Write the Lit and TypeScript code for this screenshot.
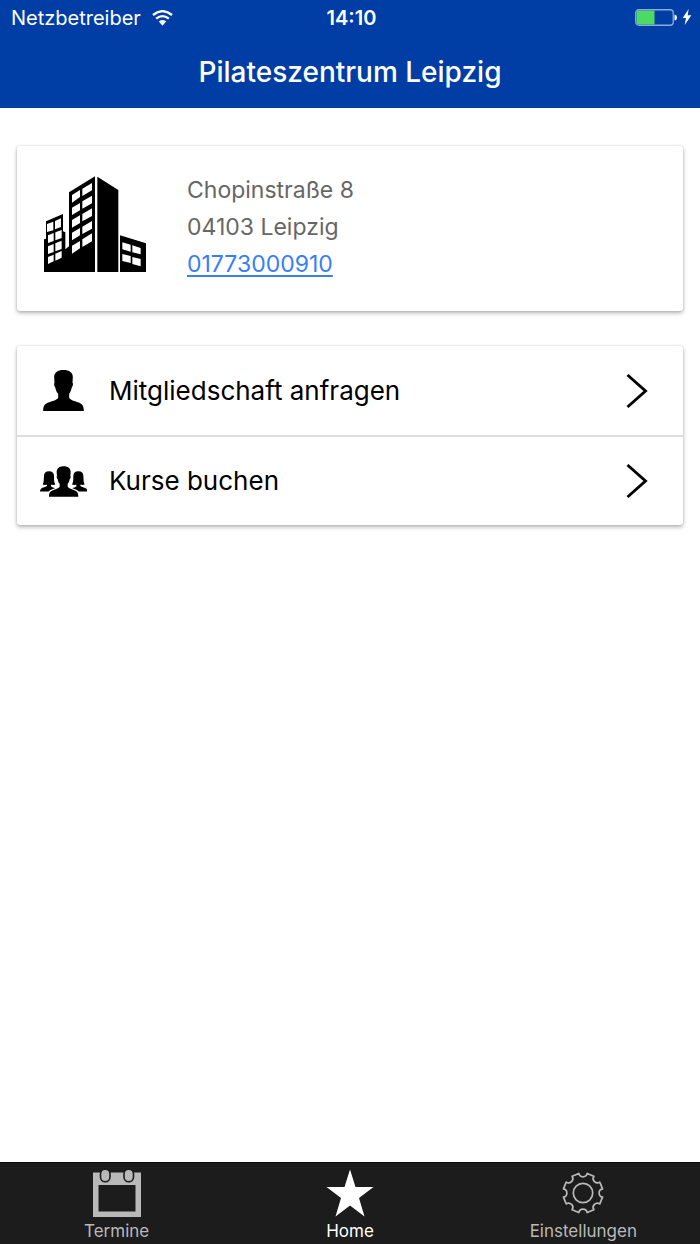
import { LitElement, html, css, svg, nothing } from "lit";
import { customElement, property } from "lit/decorators.js";

/** Outline of a cog with eight teeth and round notches between them. */
function cogOutline(centre: number, radius: number, teeth: number): string {
  const half = (12 * Math.PI) / 180;
  const step = (2 * Math.PI) / teeth;
  const at = (a: number) =>
    `${(centre + radius * Math.sin(a)).toFixed(2)} ${(centre - radius * Math.cos(a)).toFixed(2)}`;
  const notchRadius = (radius * 0.212).toFixed(2);
  let d = `M${at(-half)}`;
  for (let i = 0; i < teeth; i++) {
    d += `A${notchRadius} ${notchRadius} 0 0 0 ${at(i * step + half)}L${at((i + 1) * step - half)}`;
  }
  return d + "Z";
}

const wifi = svg`<svg class="wifi" viewBox="0 0 62 48" aria-hidden="true">
  <path fill="none" stroke="#fff" stroke-width="7" d="M2.500 15Q31 -8 59.500 15M12 26Q31 10.500 50 26"/>
  <path fill="#fff" d="M20 34.500Q31 26 42 34.500L31 47Z"/></svg>`;

const battery = svg`<svg class="battery" viewBox="0 0 42 17" role="img" aria-label="Akku 50 %">
  <rect x=".75" y=".75" width="37.500" height="15.500" rx="3" fill="none" stroke="#8fa9da" stroke-width="1.300"/>
  <path fill="#4cd964" d="M3.500 1.500H19.500V15.500H3.500Q1.500 15.500 1.500 13.500V3.500Q1.500 1.500 3.500 1.500Z"/>
  <path fill="#fff" d="M39.500 5.500Q42 6 42 8.500T39.500 11.500Z"/></svg>`;

const bolt = svg`<svg class="bolt" viewBox="0 0 26 48" aria-hidden="true">
  <path fill="#fff" d="M18 0L0 27H10L6 48L26 19H15Z"/></svg>`;

const buildings = svg`<svg class="buildings" viewBox="102 121 306 288" aria-hidden="true">
  <path d="M102 409V311L108 309V257L159 235V287L166 290V341L177 332V170L255 122V409ZM262 409V123L325 163V409ZM330 409V299L408 323V409Z"/>
  <g fill="#fff">
    <path d="M186 178L210 163V184L186 201ZM217 159L246 142V164L217 181ZM186 216L210 202V224L186 238ZM217 197L246 180V203L217 219ZM186 253L210 239V262L186 276ZM217 235L246 218V241L217 257ZM186 291L210 277V299L186 314ZM217 273L246 256V279L217 295ZM186 330L210 316V338L186 354ZM217 311L246 293V317L217 334Z"/>
    <path d="M111 265L130 258V284L111 289ZM135 256L153 248V274L135 281ZM114 299L131 292V316L114 322ZM136 290L155 283V307L136 314ZM114 332L131 325V349L114 355ZM136 323L155 315V340L136 347ZM114 364L131 357V377L114 385ZM136 354L155 346V366L136 375Z"/>
    <path d="M337 320L362 327V348L337 341ZM367 329L392 337V356L367 350ZM337 355L362 361V382L337 376ZM367 364L392 370V392L367 385Z"/>
  </g></svg>`;

const person = svg`<svg class="person" viewBox="97 105 122 123" aria-hidden="true">
  <path d="M158 105C175 105 187 113 186 127L185 143C188 145 186 154 183 157C181 166 179 172 175 176V189C179 195 190 198 201 202C214 206 219 212 219 228H97C97 212 102 206 115 202C126 198 138 195 142 189V176C137 172 135 166 133 157C130 154 129 145 131 143L130 127C129 113 141 105 158 105Z"/></svg>`;

const group = svg`<svg class="group" viewBox="87 389 141 92" aria-hidden="true">
  <path d="M158 389C171 389 179 395 179 407L178 418C180 420 179 426 176 428C175 434 173 439 170 442V451C174 457 183 458 190 461C199 464 202 469 202 481H114C114 469 117 464 126 461C133 458 142 457 146 451V442C143 439 141 434 140 428C137 426 136 420 138 418L137 407C137 395 145 389 158 389Z"/>
  <path d="M114 404C124 404 129 409 129 418C129 430 129 438 133 444C129 446 124 445 120 445V449C123 453 128 453 132 455C123 458 116 460 113 465H87C87 457 91 454 100 452C104 451 107 450 108 448V445C104 445 99 446 95 444C99 438 98 430 99 418C99 409 104 404 114 404Z"/>
  <path transform="translate(316 0) scale(-1 1)" d="M114 404C124 404 129 409 129 418C129 430 129 438 133 444C129 446 124 445 120 445V449C123 453 128 453 132 455C123 458 116 460 113 465H87C87 457 91 454 100 452C104 451 107 450 108 448V445C104 445 99 446 95 444C99 438 98 430 99 418C99 409 104 404 114 404Z"/></svg>`;

const chevron = svg`<svg class="chevron" viewBox="0 0 22 36" aria-hidden="true">
  <path fill="none" stroke="#000" stroke-width="2.900" d="M1.500 2L19.500 18L1.500 34"/></svg>`;

const calendar = svg`<svg viewBox="0 0 48 48" aria-hidden="true">
  <path fill="#b9b9b9" fill-rule="evenodd" d="M0 3.500H48V48H0ZM5.500 16V42.500H42.500V16Z"/>
  <g fill="#b9b9b9" stroke="#1c1c1c" stroke-width="1.600">
    <rect x="7.500" y=".2" width="9.500" height="12.500" rx="4.700"/>
    <rect x="31" y=".2" width="9.500" height="12.500" rx="4.700"/>
  </g></svg>`;

const star = svg`<svg viewBox="0 0 48 48" aria-hidden="true">
  <path fill="#fff" d="M24 .5L29.500 18H47.500L33 29L38.500 47.500L24 36.500L9.500 47.500L15 29L.5 18H18.500Z"/></svg>`;

const cog = svg`<svg viewBox="0 0 48 48" aria-hidden="true">
  <g fill="none" stroke="#b9b9b9" stroke-width="1.700" stroke-linejoin="round">
    <path d=${cogOutline(24, 20, 8)}/><circle cx="24" cy="24" r="9.700"/>
  </g></svg>`;

@customElement("status-bar")
export class StatusBar extends LitElement {
  static styles = css`
    :host {
      display: grid;
      grid-template-columns: 1fr auto 1fr;
      align-items: center;
      height: 36px;
      padding: 0 8px 0 11px;
      font-size: 20px;
      line-height: 24px;
    }
    .carrier, .power { display: flex; align-items: center; }
    .carrier { gap: 11px; }
    .power { justify-content: flex-end; gap: 5px; padding-bottom: 2px; }
    .time { font-weight: 600; }
    .wifi { width: 21px; height: 16px; }
    .battery { width: 42px; height: 17px; }
    .bolt { width: 10px; height: 16px; }
  `;
  render() {
    return html`
      <div class="carrier"><span>Netzbetreiber</span>${wifi}</div>
      <div class="time">14:10</div>
      <div class="power">${battery}${bolt}</div>`;
  }
}

@customElement("tab-bar")
export class TabBar extends LitElement {
  @property() active = "Home";
  static styles = css`
    :host { display: block; background: #1c1c1c; border-top: 1px solid #0d0d0d; }
    .tabs { display: grid; grid-template-columns: repeat(3, 1fr); }
    .tab {
      display: flex;
      flex-direction: column;
      align-items: center;
      gap: 3px;
      padding: 6px 0 2px;
      border: 0;
      background: none;
      color: #b9b9b9;
      font: inherit;
      font-size: 17px;
      line-height: 22px;
      cursor: pointer;
    }
    .tab[aria-current] { color: #fff; }
    .tab svg { width: 48px; height: 48px; }
  `;
  render() {
    const tabs = [
      { label: "Termine", icon: calendar },
      { label: "Home", icon: star },
      { label: "Einstellungen", icon: cog },
    ];
    return html`<nav class="tabs">
      ${tabs.map(
        (t) => html`<button class="tab" type="button"
          aria-current=${t.label === this.active ? "page" : nothing}
          @click=${() => (this.active = t.label)}>${t.icon}<span>${t.label}</span></button>`
      )}
    </nav>`;
  }
}

@customElement("app-root")
export class AppRoot extends LitElement {
  static styles = css`
    :host {
      display: flex;
      flex-direction: column;
      min-height: 100vh;
      background: #fff;
      color: #000;
      font-family: Inter, Roboto, sans-serif;
    }
    .top { background: #003da5; color: #fff; }
    .title {
      margin: 0;
      text-align: center;
      font-size: 28px;
      font-weight: 500;
      line-height: 72px;
    }
    .content {
      flex: 1;
      display: flex;
      flex-direction: column;
      gap: 35px;
      padding: 38px 17px;
    }
    .card {
      border-radius: 3px;
      background: #fff;
      box-shadow: 0 2px 4px rgba(0, 0, 0, 0.3), 0 0 2px rgba(0, 0, 0, 0.15);
    }
    .contact {
      display: flex;
      align-items: flex-start;
      gap: 41px;
      padding: 26px 27px 28px;
    }
    .buildings { width: 102px; height: 96px; padding-top: 4px; }
    .address {
      color: #666;
      font-size: 23px;
      font-style: normal;
      line-height: 37px;
    }
    .phone {
      color: #387ef5;
      text-decoration-thickness: 2px;
      text-underline-offset: 3px;
    }
    .row {
      box-sizing: border-box;
      display: grid;
      grid-template-columns: 48px 1fr auto;
      align-items: center;
      gap: 22px;
      width: 100%;
      height: 89px;
      padding: 0 35px 0 22px;
      border: 0;
      background: none;
      color: inherit;
      font: inherit;
      font-size: 26px;
      line-height: 32px;
      text-align: left;
      cursor: pointer;
    }
    .row + .row { height: 90px; border-top: 2px solid #dedede; }
    .row svg { justify-self: center; }
    .person { width: 41px; height: 41px; }
    .group { width: 47px; height: 31px; }
    .chevron { width: 22px; height: 36px; }
  `;
  render() {
    return html`
      <header class="top">
        <status-bar></status-bar>
        <h1 class="title">Pilateszentrum Leipzig</h1>
      </header>
      <main class="content">
        <section class="card contact">
          ${buildings}
          <address class="address">
            Chopinstraße 8<br />04103 Leipzig<br />
            <a class="phone" href="tel:01773000910">01773000910</a>
          </address>
        </section>
        <section class="card">
          <button class="row" type="button">${person}<span>Mitgliedschaft anfragen</span>${chevron}</button>
          <button class="row" type="button">${group}<span>Kurse buchen</span>${chevron}</button>
        </section>
      </main>
      <tab-bar></tab-bar>`;
  }
}
